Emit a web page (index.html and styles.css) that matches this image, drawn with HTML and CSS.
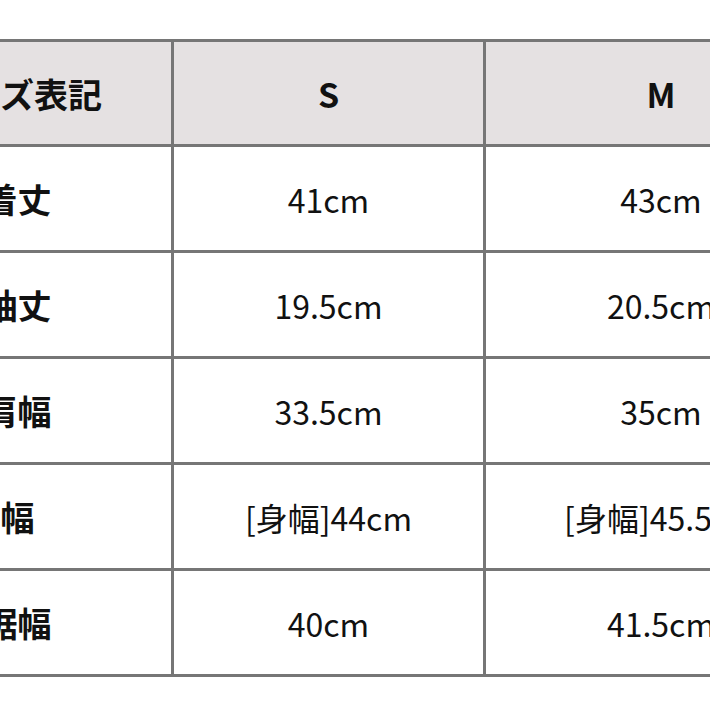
FILE: index.html
```html
<!DOCTYPE html>
<html lang="ja">
<head>
<meta charset="utf-8">
<title>サイズ表</title>
<link rel="stylesheet" href="styles.css">
</head>
<body>
<div class="size-table">
  <div class="cell head label">サイズ表記</div>
  <div class="cell head">S</div>
  <div class="cell head">M</div>

  <div class="cell label">着丈</div>
  <div class="cell">41cm</div>
  <div class="cell">43cm</div>

  <div class="cell label">袖丈</div>
  <div class="cell">19.5cm</div>
  <div class="cell">20.5cm</div>

  <div class="cell label">肩幅</div>
  <div class="cell">33.5cm</div>
  <div class="cell">35cm</div>

  <div class="cell label">身幅　</div>
  <div class="cell">[身幅]44cm</div>
  <div class="cell">[身幅]45.5cm</div>

  <div class="cell label">裾幅</div>
  <div class="cell">40cm</div>
  <div class="cell">41.5cm</div>
</div>
</body>
</html>
```

FILE: styles.css
```css
html, body {
  margin: 0;
  padding: 0;
  background: #ffffff;
  overflow: hidden;
  width: 710px;
  height: 710px;
}

.size-table {
  display: grid;
  grid-template-columns: 307px 309px 350px;
  grid-template-rows: 102px repeat(5, 103px);
  gap: 3px;
  padding: 3px;
  width: max-content;
  background: #767676;
  margin: 39px 0 0 -139px;
  font-family: "Noto Sans CJK JP", "Noto Sans", sans-serif;
  color: #111111;
}

.cell {
  background: #ffffff;
  display: flex;
  align-items: center;
  justify-content: center;
  font-size: 32px;
  font-weight: 400;
  white-space: nowrap;
  overflow: hidden;
}

.cell.head {
  background: #e5e1e2;
  font-weight: 700;
  font-size: 34px;
}

.cell.label {
  font-weight: 700;
  font-size: 34px;
}
```
